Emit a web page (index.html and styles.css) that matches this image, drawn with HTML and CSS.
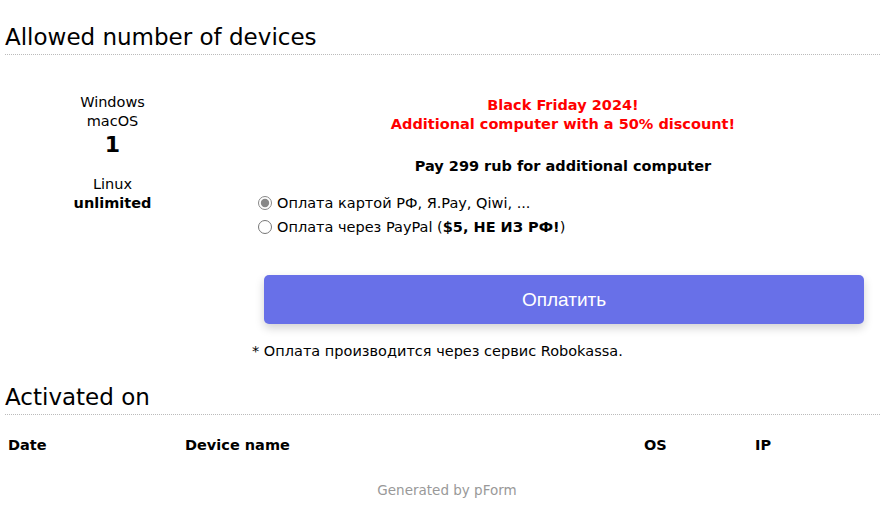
FILE: index.html
```html
<!DOCTYPE html>
<html lang="ru">
<head>
    <meta charset="UTF-8">
    <meta name="viewport" content="width=device-width, initial-scale=1.0">
    <title>Allowed number of devices</title>
    <link rel="stylesheet" href="styles.css">
</head>
<body>
    <div class="page">
        <h2 class="section-title">Allowed number of devices</h2>
        <div class="devices">
            <div class="limits">
                <div>Windows</div>
                <div>macOS</div>
                <div class="count">1</div>
                <div class="gap">Linux</div>
                <div class="bold">unlimited</div>
            </div>
            <div class="offer">
                <div class="promo">Black Friday 2024!<br>Additional computer with a 50% discount!</div>
                <div class="price">Pay 299 rub for additional computer</div>
                <form class="pay-form">
                    <label class="radio"><input type="radio" name="method" value="card" checked> Оплата картой РФ, Я.Pay, Qiwi, ...</label>
                    <label class="radio"><input type="radio" name="method" value="paypal"> Оплата через PayPal (<b>$5, НЕ ИЗ РФ!</b>)</label>
                    <button type="button" class="pay-btn">Оплатить</button>
                </form>
                <div class="note">* Оплата производится через сервис Robokassa.</div>
            </div>
        </div>

        <h2 class="section-title">Activated on</h2>
        <table class="devices-table">
            <thead>
                <tr>
                    <th class="col-date">Date</th>
                    <th class="col-name">Device name</th>
                    <th class="col-os">OS</th>
                    <th class="col-ip">IP</th>
                </tr>
            </thead>
        </table>
    </div>
    <div class="footer">Generated by <a href="#">pForm</a></div>
</body>
</html>
```

FILE: styles.css
```css
body {
    margin: 0;
    background-color: #FFFFFF;
    color: #000000;
    font-family: "DejaVu Sans", Verdana, sans-serif;
    font-size: 14.5px;
}
.page {
    padding: 0 14px 0 5px;
}
.section-title {
    margin: 0;
    padding-top: 23px;
    padding-bottom: 3px;
    font-size: 23px;
    line-height: 28px;
    font-weight: normal;
    border-bottom: 1px dotted #BBBBBB;
}
.devices {
    display: flex;
    padding-top: 38px;
    padding-bottom: 1px;
}
.limits {
    width: 215px;
    text-align: center;
    line-height: 19px;
}
.limits .count {
    font-size: 22px;
    font-weight: bold;
    line-height: 28px;
}
.limits .gap {
    margin-top: 16px;
}
.bold {
    font-weight: bold;
}
.offer {
    flex: 1;
    padding-left: 35px;
    padding-right: 9px;
}
.promo {
    margin-top: 3px;
    color: #FF0000;
    font-weight: bold;
    text-align: center;
    line-height: 19px;
}
.price {
    margin-top: 23px;
    font-weight: bold;
    text-align: center;
    line-height: 18px;
}
.pay-form {
    margin-top: 16px;
}
.radio {
    display: flex;
    align-items: center;
    line-height: 24px;
    margin-left: 3px;
}
.radio input {
    margin: 0 5px 0 0;
    width: 14px;
    height: 14px;
    accent-color: #888888;
}
.pay-btn {
    display: block;
    width: 600px;
    height: 49px;
    margin: 36px 0 0 9px;
    border: none;
    border-radius: 5px;
    background-color: #6870E8;
    color: #FFFFFF;
    font-family: "Liberation Sans", Arial, sans-serif;
    font-size: 19px;
    box-shadow: 0 4px 10px rgba(0, 0, 0, 0.18);
    cursor: pointer;
}
.note {
    margin-top: 19px;
    margin-left: -3px;
}
.devices-table {
    width: 100%;
    margin-top: 19px;
    border-collapse: collapse;
}
.devices-table th {
    text-align: left;
    padding: 3px;
}
.col-date {
    width: 171px;
}
.col-name {
    width: 453px;
}
.col-os {
    width: 105px;
}
.footer {
    margin-top: 26px;
    text-align: center;
    color: #999999;
    font-size: 13.5px;
}
.footer a {
    color: #999999;
    text-decoration: none;
    border-bottom: 1px dotted #999999;
}
```
